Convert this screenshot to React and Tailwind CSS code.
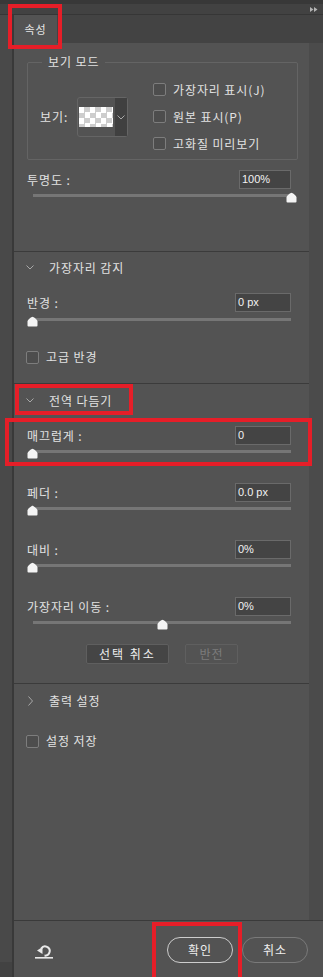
import React from "react";

function Thumb({ className }) {
  return (
    <svg className={className} width="11" height="11" viewBox="0 0 11 11">
      <path d="M5.5 0.8 C6.5 0.8 10.5 4 10.5 5.5 V9.5 Q10.5 10.5 9.5 10.5 H1.5 Q0.5 10.5 0.5 9.5 V5.5 C0.5 4 4.5 0.8 5.5 0.8 Z" fill="#f4f4f4" />
    </svg>
  );
}

function Slider({ thumbClass, mt }) {
  return (
    <div className={"relative h-[12px] ml-[19px] w-[258px] shrink-0 " + mt}>
      <div className="absolute left-0 right-0 top-[2px] h-[3px] bg-[#767676]" />
      <Thumb className={"absolute top-0 " + thumbClass} />
    </div>
  );
}

function FieldRow({ label, value, mt, wide = true }) {
  return (
    <div className={"flex items-center h-[19px] shrink-0 " + mt}>
      <span className="ml-[13px] text-[12px] text-[#e2e2e2]">{label}</span>
      <div
        className={
          "ml-auto mr-[18px] h-[19px] bg-[#444444] border border-[#6a6a6a] flex items-center pl-[2px] text-[11px] tracking-normal text-[#f2f2f2] font-['Liberation_Sans',sans-serif] " +
          (wide ? "w-[56px]" : "w-[52px]")
        }
      >
        {value}
      </div>
    </div>
  );
}

function Check() {
  return <div className="w-[13px] h-[13px] rounded-[2px] border border-[#7d7d7d] bg-[#4d4d4d] shrink-0" />;
}

function Down() {
  return (
    <svg width="8" height="5" viewBox="0 0 8 5">
      <polyline points="0.5,0.5 4,4 7.5,0.5" fill="none" stroke="#a8a8a8" strokeWidth="1" />
    </svg>
  );
}

function Right() {
  return (
    <svg width="5" height="10" viewBox="0 0 5 10">
      <polyline points="0.5,0.5 4.5,5 0.5,9.5" fill="none" stroke="#a8a8a8" strokeWidth="1" />
    </svg>
  );
}

function Header({ children, open = true, mt = "mt-[6px]" }) {
  return (
    <div className={"flex items-center h-[21px] shrink-0 " + mt}>
      <div className="ml-[12px] w-[8px] flex justify-center">{open ? <Down /> : <Right />}</div>
      <span className="ml-[15px] text-[12px] text-[#e2e2e2]">{children}</span>
    </div>
  );
}

export default function App() {
  return (
    <div className="relative w-[323px] h-[977px] overflow-hidden bg-[#535353] text-[#e4e4e4] font-['Noto_Sans_CJK_KR','Noto_Sans',sans-serif] text-[12px] leading-none tracking-[0.9px]">
      {/* top bar */}
      <div className="h-[15px] flex flex-col">
        <div className="h-[4px] bg-[#383838]" />
        <div className="h-[10px] bg-[#424242] flex items-center justify-end pr-[5px]">
          <svg width="8" height="5" viewBox="0 0 8 5">
            <polygon points="0,0 3.5,2.5 0,5" fill="#b4b4b4" />
            <polygon points="4,0 7.5,2.5 4,5" fill="#b4b4b4" />
          </svg>
        </div>
        <div className="h-[1px] bg-[#363636]" />
      </div>

      <div className="flex h-[962px]">
        {/* left strip */}
        <div className="w-[12px] flex flex-col">
          <div className="flex-1 bg-[#494949]" />
          <div className="h-[15px] bg-[#424242]" />
        </div>
        <div className="w-[2px] bg-[#393939]" />

        <div className="flex-1 flex flex-col">
          {/* tab bar */}
          <div className="h-[28px] bg-[#434343] flex shrink-0">
            <div className="w-[43px] bg-[#535353] flex items-center justify-center pt-[1px] text-[11px] text-[#e6e6e6]">속성</div>
          </div>

          {/* middle */}
          <div className="flex h-[877px]">
            <div className="flex-1 flex flex-col">
              {/* section 1 */}
              <div className="h-[208px] pt-[19px] flex flex-col shrink-0">
                <div className="relative ml-[13px] w-[271px] h-[98px] border border-[#646464] rounded-[2px] flex shrink-0">
                  <span className="absolute -top-[8px] left-[14px] px-[6px] bg-[#535353] text-[12px] leading-[14px] text-[#e2e2e2]">보기 모드</span>
                  <div className="ml-[12px] mt-[34px] h-[40px] flex items-center">
                    <span className="w-[37px] text-[12px] text-[#e2e2e2]">보기:</span>
                    <div className="w-[51px] h-[40px] border border-[#656565] rounded-[3px] flex items-center">
                      <div className="ml-[1px] w-[34px] h-[20px] bg-[repeating-conic-gradient(#cdcdcd_0_25%,#ffffff_0_50%)] bg-[length:11px_11px]" />
                      <div className="ml-[2px] w-[12px] h-full bg-[#404040] flex items-center justify-center">
                        <Down />
                      </div>
                    </div>
                  </div>
                  <div className="ml-[25px] mt-[13px] flex flex-col">
                    <div className="h-[27px] flex items-center">
                      <Check />
                      <span className="ml-[7px] text-[12px] text-[#e2e2e2]">가장자리 표시(J)</span>
                    </div>
                    <div className="h-[27px] flex items-center">
                      <Check />
                      <span className="ml-[7px] text-[12px] text-[#e2e2e2]">원본 표시(P)</span>
                    </div>
                    <div className="h-[27px] flex items-center">
                      <Check />
                      <span className="ml-[7px] text-[12px] text-[#e2e2e2]">고화질 미리보기</span>
                    </div>
                  </div>
                </div>
                <FieldRow label="투명도 :" value="100%" mt="mt-[10px]" wide={false} />
                <Slider mt="mt-[3px]" thumbClass="left-[253px]" />
              </div>
              <div className="h-[1px] bg-[#3b3b3b] shrink-0" />

              {/* section 2 */}
              <div className="h-[131px] flex flex-col shrink-0">
                <Header mt="mt-[5px]">가장자리 감지</Header>
                <FieldRow label="반경 :" value="0 px" mt="mt-[15px]" />
                <Slider mt="mt-[4px]" thumbClass="-left-[6px]" />
                <div className="flex items-center h-[14px] mt-[22px] shrink-0">
                  <div className="ml-[12px]"><Check /></div>
                  <span className="ml-[7px] text-[12px] text-[#e2e2e2]">고급 반경</span>
                </div>
              </div>
              <div className="h-[1px] bg-[#3b3b3b] shrink-0" />

              {/* section 3 */}
              <div className="h-[299px] flex flex-col shrink-0">
                <Header>전역 다듬기</Header>
                <FieldRow label="매끄럽게 :" value="0" mt="mt-[15px]" />
                <Slider mt="mt-[3px]" thumbClass="-left-[6px]" />
                <FieldRow label="페더 :" value="0.0 px" mt="mt-[23px]" />
                <Slider mt="mt-[3px]" thumbClass="-left-[6px]" />
                <FieldRow label="대비 :" value="0%" mt="mt-[23px]" />
                <Slider mt="mt-[3px]" thumbClass="-left-[6px]" />
                <FieldRow label="가장자리 이동 :" value="0%" mt="mt-[23px]" />
                <Slider mt="mt-[3px]" thumbClass="left-[124px]" />
                <div className="flex mt-[13px] h-[20px] shrink-0">
                  <div className="ml-[72px] w-[83px] h-[20px] bg-[#454545] border border-[#5f5f5f] rounded-[2px] flex items-center justify-center text-[12px] tracking-[2px] text-[#eeeeee]">
                    선택 취소
                  </div>
                  <div className="ml-[16px] w-[53px] h-[20px] border border-[#5f5f5f] rounded-[2px] flex items-center justify-center text-[12px] tracking-[1px] text-[#7c7c7c]">
                    반전
                  </div>
                </div>
              </div>
              <div className="h-[1px] bg-[#3b3b3b] shrink-0" />

              {/* section 4 */}
              <div className="flex-1 flex flex-col">
                <Header open={false}>출력 설정</Header>
                <div className="flex items-center h-[14px] mt-[23px] shrink-0">
                  <div className="ml-[12px]"><Check /></div>
                  <span className="ml-[7px] text-[12px] text-[#e2e2e2]">설정 저장</span>
                </div>
              </div>
            </div>
            <div className="w-[14px] bg-[#4b4b4b]" />
          </div>

          {/* footer */}
          <div className="h-[57px] border-t border-[#3a3a3a] flex items-start pt-[16px] shrink-0">
            <div className="ml-[21px] mt-[8px]">
              <svg width="18" height="14" viewBox="0 0 18 14">
                <path d="M6.2 3.6 A4.6 4.6 0 1 1 9.5 10.6" fill="none" stroke="#e8e8e8" strokeWidth="2" />
                <polygon points="2,5.5 7.5,2 7.5,9" fill="#e8e8e8" />
                <rect x="0" y="12" width="18" height="1.6" fill="#e8e8e8" />
              </svg>
            </div>
            <div className="ml-auto w-[66px] h-[26px] rounded-full border border-[#cdcdcd] flex items-center justify-center text-[12px] tracking-[1px] text-[#eeeeee]">
              확인
            </div>
            <div className="ml-[9px] mr-[15px] w-[66px] h-[26px] rounded-full border border-[#7a7a7a] flex items-center justify-center text-[12px] tracking-[1px] text-[#eeeeee]">
              취소
            </div>
          </div>
        </div>
      </div>

      {/* red annotation boxes */}
      <div className="absolute left-[8px] top-[4px] w-[54px] h-[45px] border-[4px] border-[#e61e28]" />
      <div className="absolute left-[15px] top-[384px] w-[118px] h-[31px] border-[4px] border-[#e61e28]" />
      <div className="absolute left-[5px] top-[418px] w-[307px] h-[48px] border-[4px] border-[#e61e28]" />
      <div className="absolute left-[152px] top-[922px] w-[90px] h-[60px] border-[4px] border-[#e61e28]" />
    </div>
  );
}
